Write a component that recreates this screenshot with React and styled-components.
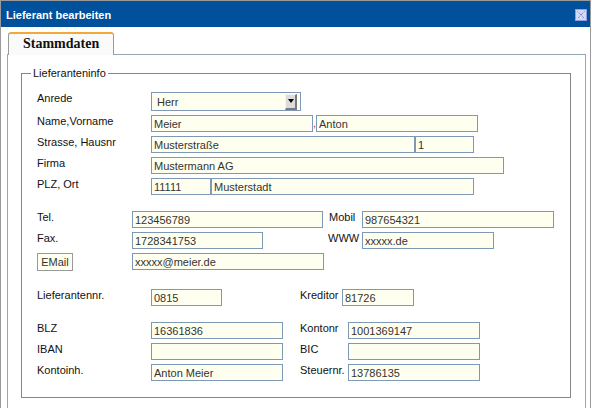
import React from "react";
import styled, { createGlobalStyle } from "styled-components";

const GlobalStyle = createGlobalStyle`
  body {
    margin: 0;
    background: #fff;
    font-family: "Liberation Sans", Arial, sans-serif;
  }
`;

const Window = styled.div`
  box-sizing: border-box;
  width: 591px;
  height: 408px;
  border: 1px solid #9a9a9a;
  border-bottom: none;
  background: #fff;
  overflow: hidden;
`;

const TitleBar = styled.div`
  box-sizing: border-box;
  height: 26px;
  background: #00509b;
  display: flex;
  align-items: center;
  justify-content: space-between;
  padding: 1px 3px 0 5px;
  color: #fff;
  font: bold 11px "Liberation Sans", Arial, sans-serif;
`;

const CloseButton = styled.button`
  width: 12px;
  height: 12px;
  padding: 0;
  border: none;
  background: none;
  display: flex;
  cursor: pointer;
`;

const Body = styled.div`
  padding: 5px 4px 0 6px;
`;

const TabStrip = styled.div`
  display: flex;
  padding-left: 1px;
  height: 22px;
`;

const Tab = styled.div`
  box-sizing: border-box;
  height: 23px;
  position: relative;
  z-index: 1;
  border-top: 2px solid #f2a93b;
  border-left: 1px solid #9a9a9a;
  border-right: 1px solid #9a9a9a;
  border-radius: 3px 3px 0 0;
  background: #fafafa;
  padding: 0 14px;
  font: bold 14px "Liberation Serif", "Times New Roman", serif;
  line-height: 20px;
  color: #111;
`;

const Panel = styled.div`
  border: 1px solid #94a8b4;
  border-bottom: none;
  height: 360px;
  background: #fff;
`;

const Fieldset = styled.fieldset`
  margin: 12px 14px 0 13px;
  border: 1px solid #858585;
  padding: 12px 0 16px 0;
  min-width: 0;
`;

const Legend = styled.legend`
  margin-left: 9px;
  padding: 0 2px;
  font-size: 11px;
  line-height: 13px;
  color: #111;
`;

const Content = styled.div`
  padding-left: 15px;
`;

const Section = styled.div`
  margin-top: ${(p) => p.$gap || 0}px;
  display: flex;
  flex-direction: column;
  gap: 4px;
`;

const Row = styled.div`
  display: flex;
  align-items: flex-start;
`;

const Label = styled.label`
  width: ${(p) => p.$w}px;
  flex: none;
  font-size: 11px;
  line-height: 13px;
  color: #111;
`;

const Cell = styled.div`
  width: ${(p) => p.$w}px;
  flex: none;
  display: flex;
`;

const Field = styled.input`
  box-sizing: border-box;
  width: ${(p) => p.$w}px;
  height: 17px;
  margin: 0;
  padding: 0 2px;
  border: 1px solid #7e99b6;
  background: #fffff0;
  color: #333;
  font: 11px "Liberation Sans", Arial, sans-serif;
  outline: none;
`;

const Comma = styled.span`
  width: 3px;
  flex: none;
  color: #d02424;
  font-size: 11px;
  line-height: 17px;
`;

const SelectBox = styled.div`
  box-sizing: border-box;
  width: 150px;
  height: 19px;
  border: 1px solid #7e99b6;
  background: #fffff0;
  display: flex;
  align-items: center;
  justify-content: space-between;
  padding: 0 3px 0 5px;
  font-size: 11px;
  color: #333;
`;

const ArrowButton = styled.span`
  box-sizing: border-box;
  width: 12px;
  height: 16px;
  background: #dcdcdc;
  border-top: 1px solid #f4f4f4;
  border-left: 1px solid #f4f4f4;
  border-right: 2px solid #7a7a7a;
  border-bottom: 2px solid #7a7a7a;
  display: flex;
  align-items: center;
  justify-content: center;
  &::after {
    content: "";
    border-left: 3px solid transparent;
    border-right: 3px solid transparent;
    border-top: 4px solid #000;
  }
`;

const MailButton = styled.button`
  box-sizing: border-box;
  width: 36px;
  height: 18px;
  margin: 0;
  padding: 0;
  border: 1px solid #9a9a9a;
  background: #fffff0;
  color: #333;
  font: 11px "Liberation Sans", Arial, sans-serif;
  cursor: pointer;
`;

const CloseIcon = () => (
  <svg width="12" height="12" viewBox="0 0 12 12">
    <rect x="0.5" y="0.5" width="11" height="11" fill="#d3daf6" stroke="#8f9ee0" />
    <path d="M2.5 2.5 L9.5 9.5 M9.5 2.5 L2.5 9.5" stroke="#5b6fcf" strokeWidth="1" strokeDasharray="1 1" />
  </svg>
);

export default function App() {
  return (
    <>
      <GlobalStyle />
      <Window>
        <TitleBar>
          <span>Lieferant bearbeiten</span>
          <CloseButton aria-label="Schließen">
            <CloseIcon />
          </CloseButton>
        </TitleBar>
        <Body>
          <TabStrip>
            <Tab>Stammdaten</Tab>
          </TabStrip>
          <Panel>
            <Fieldset>
              <Legend>Lieferanteninfo</Legend>
              <Content>
                <Section>
                  <Row>
                    <Label $w={114}>Anrede</Label>
                    <SelectBox>
                      <span>Herr</span>
                      <ArrowButton />
                    </SelectBox>
                  </Row>
                  <Row>
                    <Label $w={114}>Name,Vorname</Label>
                    <Field $w={162} defaultValue="Meier" />
                    <Comma>,</Comma>
                    <Field $w={162} defaultValue="Anton" />
                  </Row>
                  <Row>
                    <Label $w={114}>Strasse, Hausnr</Label>
                    <Field $w={264} defaultValue="Musterstraße" />
                    <Field $w={59} defaultValue="1" />
                  </Row>
                  <Row>
                    <Label $w={114}>Firma</Label>
                    <Field $w={353} defaultValue="Mustermann AG" />
                  </Row>
                  <Row>
                    <Label $w={114}>PLZ, Ort</Label>
                    <Field $w={60} defaultValue="11111" />
                    <Field $w={263} defaultValue="Musterstadt" />
                  </Row>
                </Section>

                <Section $gap={16}>
                  <Row>
                    <Label $w={95}>Tel.</Label>
                    <Cell $w={197}>
                      <Field $w={191} defaultValue="123456789" />
                    </Cell>
                    <Label $w={33}>Mobil</Label>
                    <Field $w={192} defaultValue="987654321" />
                  </Row>
                  <Row>
                    <Label $w={95}>Fax.</Label>
                    <Cell $w={196}>
                      <Field $w={131} defaultValue="1728341753" />
                    </Cell>
                    <Label $w={34}>WWW</Label>
                    <Field $w={132} defaultValue="xxxxx.de" />
                  </Row>
                  <Row>
                    <Cell $w={95}>
                      <MailButton>EMail</MailButton>
                    </Cell>
                    <Field $w={192} defaultValue="xxxxx@meier.de" />
                  </Row>
                </Section>

                <Section $gap={18}>
                  <Row>
                    <Label $w={114}>Lieferantennr.</Label>
                    <Cell $w={149}>
                      <Field $w={71} defaultValue="0815" />
                    </Cell>
                    <Label $w={42}>Kreditor</Label>
                    <Field $w={72} defaultValue="81726" />
                  </Row>
                </Section>

                <Section $gap={16}>
                  <Row>
                    <Label $w={114}>BLZ</Label>
                    <Cell $w={149}>
                      <Field $w={132} defaultValue="16361836" />
                    </Cell>
                    <Label $w={48}>Kontonr</Label>
                    <Field $w={132} defaultValue="1001369147" />
                  </Row>
                  <Row>
                    <Label $w={114}>IBAN</Label>
                    <Cell $w={149}>
                      <Field $w={132} defaultValue="" />
                    </Cell>
                    <Label $w={48}>BIC</Label>
                    <Field $w={132} defaultValue="" />
                  </Row>
                  <Row>
                    <Label $w={114}>Kontoinh.</Label>
                    <Cell $w={149}>
                      <Field $w={132} defaultValue="Anton Meier" />
                    </Cell>
                    <Label $w={48}>Steuernr.</Label>
                    <Field $w={132} defaultValue="13786135" />
                  </Row>
                </Section>
              </Content>
            </Fieldset>
          </Panel>
        </Body>
      </Window>
    </>
  );
}
